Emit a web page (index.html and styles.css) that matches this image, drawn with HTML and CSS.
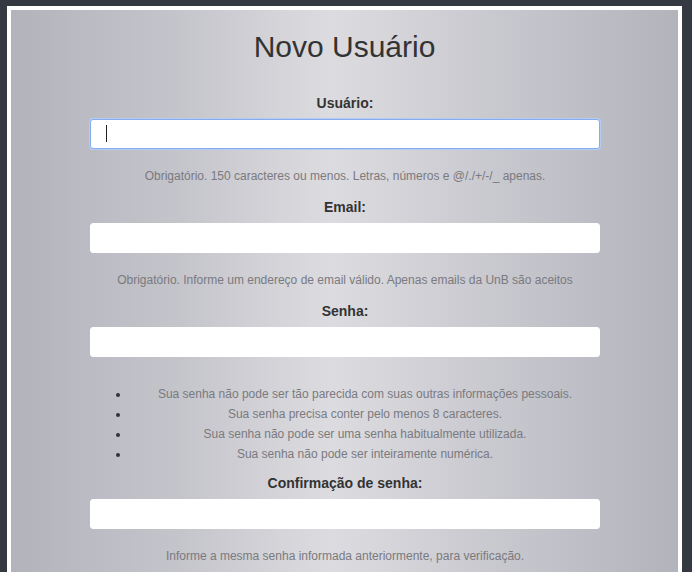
FILE: index.html
```html
<!DOCTYPE html>
<html lang="pt-BR">
<head>
<meta charset="utf-8">
<title>Novo Usuário</title>
<link rel="stylesheet" href="styles.css">
</head>
<body>
<div class="panel">
  <h1 class="title">Novo Usuário</h1>
  <form class="form">
    <div class="field">
      <label class="label" for="u">Usuário:</label>
      <div class="input-wrap">
        <input id="u" class="input input-focus" type="text">
        <span class="caret"></span>
      </div>
      <p class="help">Obrigatório. 150 caracteres ou menos. Letras, números e @/./+/-/_ apenas.</p>
    </div>
    <div class="field">
      <label class="label" for="e">Email:</label>
      <input id="e" class="input" type="text">
      <p class="help">Obrigatório. Informe um endereço de email válido. Apenas emails da UnB são aceitos</p>
    </div>
    <div class="field">
      <label class="label" for="s">Senha:</label>
      <input id="s" class="input" type="password">
      <ul class="rules">
        <li>Sua senha não pode ser tão parecida com suas outras informações pessoais.</li>
        <li>Sua senha precisa conter pelo menos 8 caracteres.</li>
        <li>Sua senha não pode ser uma senha habitualmente utilizada.</li>
        <li>Sua senha não pode ser inteiramente numérica.</li>
      </ul>
    </div>
    <div class="field field-tight">
      <label class="label" for="c">Confirmação de senha:</label>
      <input id="c" class="input" type="password">
      <p class="help">Informe a mesma senha informada anteriormente, para verificação.</p>
    </div>
  </form>
</div>
</body>
</html>
```
FILE: styles.css
```css
html, body {
  margin: 0;
  padding: 0;
  height: 100%;
  overflow: hidden;
}
body {
  background: #353a42;
  font-family: "Liberation Sans", Arial, sans-serif;
  color: #333;
}
.panel {
  margin: 6px 0 0 7px;
  width: 667px;
  height: 700px;
  border: 4px solid #ffffff;
  border-bottom: none;
  background: linear-gradient(to right, #b3b3bc 0%, #c4c4cb 25%, #dcdce0 48%, #c6c6cd 75%, #b3b3bc 100%);
}
.title {
  margin: 0;
  padding-top: 19px;
  font-size: 30px;
  line-height: 36px;
  font-weight: normal;
  text-align: center;
  color: #333;
}
.form {
  width: 510px;
  margin: 28px auto 0;
  padding-left: 1px;
}
.field {
  display: flex;
  flex-direction: column;
  align-items: stretch;
  margin-bottom: 13px;
}
.label {
  display: block;
  font-size: 14px;
  line-height: 20px;
  font-weight: bold;
  text-align: center;
  color: #333;
  margin-bottom: 6px;
}
.input-wrap {
  position: relative;
}
.input {
  display: block;
  box-sizing: border-box;
  width: 100%;
  height: 30px;
  margin: 0;
  padding: 0 15px;
  border: 1px solid #ffffff;
  border-radius: 3px;
  background: #ffffff;
  font-family: "Liberation Sans", Arial, sans-serif;
  font-size: 14px;
  outline: none;
}
.input-focus {
  border: 1px solid #86acee;
  box-shadow: 0 0 0 1px #b6cdf3;
}
.caret {
  position: absolute;
  left: 16px;
  top: 6px;
  width: 1px;
  height: 17px;
  background: #222;
}
.help {
  margin: 19px 0 0;
  font-size: 12px;
  line-height: 16px;
  text-align: center;
  color: #7a7a7f;
}
.rules {
  margin: 27px 0 0;
  padding: 0 0 0 40px;
  font-size: 12px;
  line-height: 20px;
  text-align: center;
  color: #7a7a7f;
}
.rules li::marker {
  color: #333;
}
.field:nth-child(3) {
  margin-bottom: 9px;
}
```
